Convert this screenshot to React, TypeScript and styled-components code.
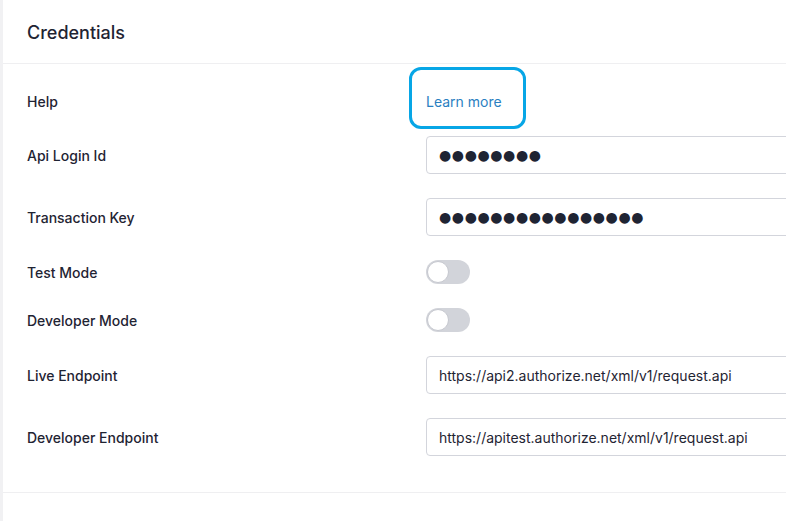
import React from "react";
import styled, { createGlobalStyle } from "styled-components";

const GlobalStyle = createGlobalStyle`
	body {
		margin: 0;
		background: #f1f1f3;
		font-family: Inter, "Noto Sans", sans-serif;
		color: #1f2433;
		overflow: hidden;
	}
`;

const Card = styled.section`
	width: 830px;
	margin-left: 3px;
	background: #ffffff;
	min-height: 521px;
`;

const Header = styled.header`
	height: 64px;
	display: flex;
	align-items: center;
	padding: 2px 24px 0 24px;
	box-sizing: border-box;
	border-bottom: 1px solid #efeff1;

	>h2 {
		margin: 0;
		font-size: 18px;
		font-weight: 500;
		color: #1f2433;
	}
`;

const Body = styled.div`
	display: grid;
	grid-template-columns: 399px 1fr;
	align-items: center;
	row-gap: 24px;
	padding: 27px 24px 36px 24px;
	border-bottom: 1px solid #efeff1;
`;

const Label = styled.label`
	font-size: 14px;
	font-weight: 500;
	color: #1f2433;
	line-height: 20px;
	padding-top: 1px;
`;

const Field = styled.div`
	position: relative;
	min-height: 21px;
	display: flex;
	align-items: center;
`;

const Link = styled.a`
	font-size: 14px;
	line-height: 20px;
	padding-top: 1px;
	color: #2a7fc1;
	text-decoration: none;
`;

const Highlight = styled.span`
	position: absolute;
	left: -17px;
	top: -24px;
	width: 111px;
	height: 56px;
	border: 3px solid #07a6e6;
	border-radius: 12px;
	pointer-events: none;
`;

const TextInput = styled.input<{ $secret?: boolean }>`
	box-sizing: border-box;
	width: 100%;
	height: 38px;
	padding: 0 12px;
	border: 1px solid #d3d5dc;
	border-radius: 4px;
	background: #fff;
	font-family: ${p => (p.$secret ? '"DejaVu Sans", sans-serif' : 'Inter, "Noto Sans", sans-serif')};
	font-size: 14px;
	letter-spacing: ${p => (p.$secret ? "0.6px" : "0")};
	color: #1f2433;
	outline: none;
`;

const Toggle = styled.button<{ $on?: boolean }>`
	position: relative;
	width: 44px;
	height: 24px;
	padding: 0;
	border: none;
	border-radius: 12px;
	background: ${p => (p.$on ? "#2a7fc1" : "#d2d4da")};
	cursor: pointer;

	&::after {
		content: "";
		position: absolute;
		top: 1px;
		left: ${p => (p.$on ? "21px" : "1px")};
		width: 22px;
		height: 22px;
		box-sizing: border-box;
		border-radius: 50%;
		background: #fff;
		border: 1px solid #c6c8cf;
	}
`;

const Footer = styled.div`
	height: 28px;
`;

export default function App() {
	return (
		<>
			<GlobalStyle />
			<Card>
				<Header>
					<h2>Credentials</h2>
				</Header>
				<Body>
					<Label>Help</Label>
					<Field>
						<Link href="#">Learn more</Link>
						<Highlight />
					</Field>

					<Label>Api Login Id</Label>
					<Field>
						<TextInput $secret readOnly value={"●".repeat(8)} />
					</Field>

					<Label>Transaction Key</Label>
					<Field>
						<TextInput $secret readOnly value={"●".repeat(16)} />
					</Field>

					<Label>Test Mode</Label>
					<Field>
						<Toggle aria-label="Test Mode" />
					</Field>

					<Label>Developer Mode</Label>
					<Field>
						<Toggle aria-label="Developer Mode" />
					</Field>

					<Label>Live Endpoint</Label>
					<Field>
						<TextInput readOnly value="https://api2.authorize.net/xml/v1/request.api" />
					</Field>

					<Label>Developer Endpoint</Label>
					<Field>
						<TextInput readOnly value="https://apitest.authorize.net/xml/v1/request.api" />
					</Field>
				</Body>
				<Footer />
			</Card>
		</>
	);
}
